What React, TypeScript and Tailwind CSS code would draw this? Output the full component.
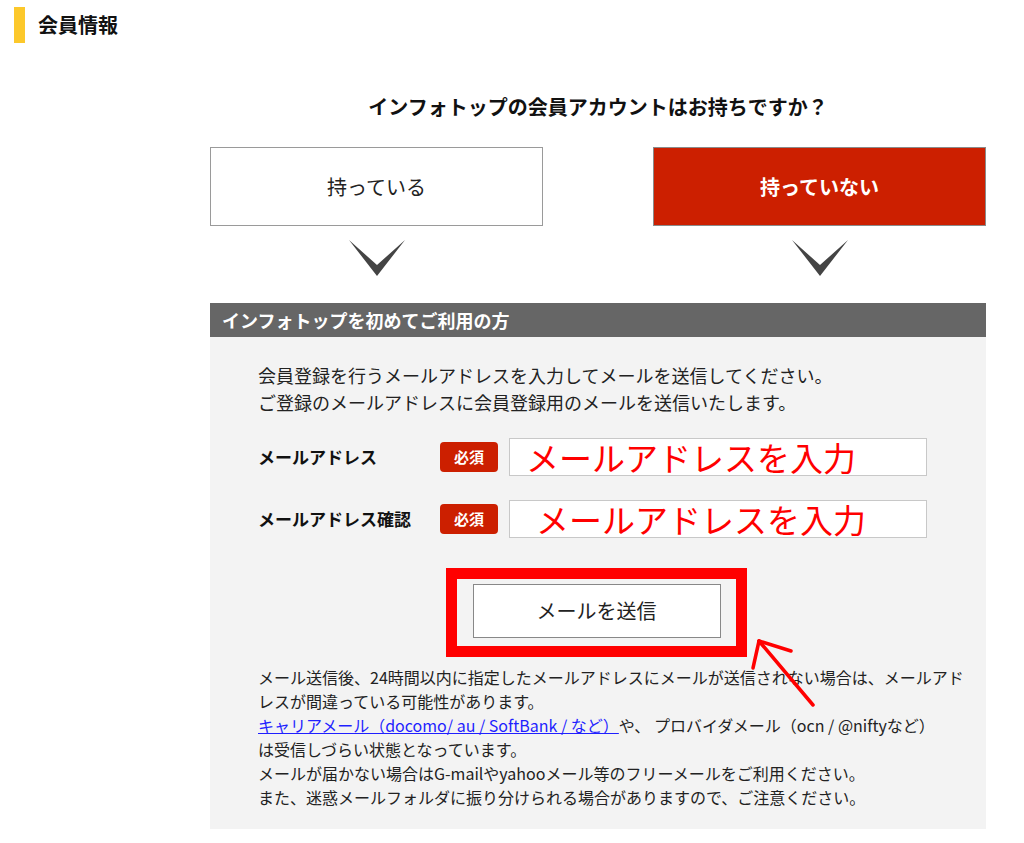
const jp = "font-['Noto_Sans_CJK_JP','Noto_Sans',sans-serif]";

function Chevron() {
  return (
    <svg width="56" height="36" viewBox="0 0 56 36" className="block">
      <polygon points="0,0 28,25 56,0 28,36" fill="#444444" />
    </svg>
  );
}

function Field({ label, pad }: { label: string; pad: string }) {
  return (
    <div className="flex items-center">
      <div className="w-[182px] text-[17px] font-bold text-[#111]">{label}</div>
      <span className="flex h-[30px] w-[58px] items-center justify-center rounded-[4px] bg-[#cc1f00] text-[15px] font-bold text-white">
        必須
      </span>
      <div
        className={`ml-[11px] flex h-[38px] w-[418px] items-center border border-[#c8c8c8] bg-white ${pad} text-[33px] leading-none text-[#ff0000]`}
      >
        メールアドレスを入力
      </div>
    </div>
  );
}

export default function App() {
  return (
    <div className={`relative min-h-[843px] bg-white text-[#222] ${jp}`}>
      <div className="flex items-center pl-[14px] pt-[7px]">
        <span className="h-[36px] w-[11px] bg-[#fcc82b]" />
        <h1 className="ml-[13px] text-[20px] font-bold text-[#111]">会員情報</h1>
      </div>

      <div className="ml-[210px] w-[776px]">
        <p className="mt-[50px] text-center text-[20px] font-bold leading-[28px] text-[#111]">
          インフォトップの会員アカウントはお持ちですか？
        </p>

        <div className="mt-[26px] flex justify-between">
          <div className="flex w-[333px] flex-col items-center">
            <button className="flex h-[79px] w-full items-center justify-center border border-[#9a9a9a] bg-white text-[20px] text-[#222]">
              持っている
            </button>
            <div className="mt-[14px]">
              <Chevron />
            </div>
          </div>
          <div className="flex w-[333px] flex-col items-center">
            <button className="flex h-[79px] w-full items-center justify-center border border-[#8a8a8a] bg-[#cc1f00] text-[20px] font-bold text-white">
              持っていない
            </button>
            <div className="mt-[14px]">
              <Chevron />
            </div>
          </div>
        </div>

        <div className="mt-[27px] flex h-[34px] items-center bg-[#666666] pl-[12px] text-[18px] font-bold text-white">
          インフォトップを初めてご利用の方
        </div>

        <div className="bg-[#f3f3f3] pb-[20px] pl-[48px] pr-[16px] pt-[25px]">
          <p className="text-[18px] leading-[27px] text-[#222]">
            会員登録を行うメールアドレスを入力してメールを送信してください。
            <br />
            ご登録のメールアドレスに会員登録用のメールを送信いたします。
          </p>

          <div className="mt-[22px] flex flex-col gap-[24px]">
            <Field label="メールアドレス" pad="pl-[16px]" />
            <Field label="メールアドレス確認" pad="pl-[26px]" />
          </div>

          <div className="ml-[188px] mt-[30px] flex h-[89px] w-[301px] items-center justify-center border-[11px] border-[#ff0000]">
            <button className="mt-[-4px] flex h-[54px] w-[248px] items-center justify-center border border-[#888] bg-white text-[20px] text-[#222]">
              メールを送信
            </button>
          </div>

          <p className="mt-[8px] whitespace-nowrap text-[16px] leading-[24px] text-[#222]">
            メール送信後、24時間以内に指定したメールアドレスにメールが送信されない場合は、メールアド
            <br />
            レスが間違っている可能性があります。
            <br />
            <a href="#" className="text-[#1f1fff] underline">
              キャリアメール（docomo/ au / SoftBank / など）
            </a>
            や、 プロバイダメール（ocn / @niftyなど）
            <br />
            は受信しづらい状態となっています。
            <br />
            メールが届かない場合はG-mailやyahooメール等のフリーメールをご利用ください。
            <br />
            また、迷惑メールフォルダに振り分けられる場合がありますので、ご注意ください。
          </p>
        </div>
      </div>

      <svg
        className="pointer-events-none absolute left-[740px] top-[620px]"
        width="100"
        height="100"
        viewBox="0 0 100 100"
      >
        <g stroke="#ff0000" strokeWidth="3.5" strokeLinecap="round" fill="none">
          <line x1="19" y1="21" x2="73" y2="85" />
          <line x1="19" y1="21" x2="51" y2="31" />
          <line x1="19" y1="21" x2="13" y2="48" />
        </g>
      </svg>
    </div>
  );
}
